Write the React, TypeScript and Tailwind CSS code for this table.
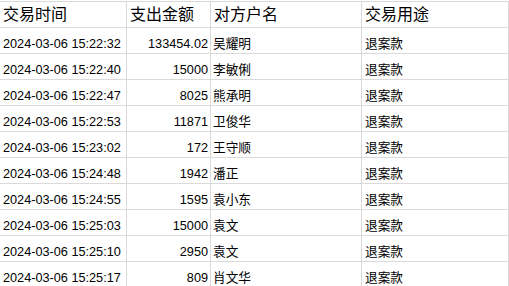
interface Txn {
    time: string;
    amount: string;
    name: string;
    purpose: string;
}

const rows: Txn[] = [
    { time: '2024-03-06 15:22:32', amount: '133454.02', name: '吴耀明', purpose: '退案款' },
    { time: '2024-03-06 15:22:40', amount: '15000', name: '李敏俐', purpose: '退案款' },
    { time: '2024-03-06 15:22:47', amount: '8025', name: '熊承明', purpose: '退案款' },
    { time: '2024-03-06 15:22:53', amount: '11871', name: '卫俊华', purpose: '退案款' },
    { time: '2024-03-06 15:23:02', amount: '172', name: '王守顺', purpose: '退案款' },
    { time: '2024-03-06 15:24:48', amount: '1942', name: '潘正', purpose: '退案款' },
    { time: '2024-03-06 15:24:55', amount: '1595', name: '袁小东', purpose: '退案款' },
    { time: '2024-03-06 15:25:03', amount: '15000', name: '袁文', purpose: '退案款' },
    { time: '2024-03-06 15:25:10', amount: '2950', name: '袁文', purpose: '退案款' },
    { time: '2024-03-06 15:25:17', amount: '809', name: '肖文华', purpose: '退案款' },
];

const font = {
    fontFamily: '"Liberation Sans", Arial, "Noto Sans CJK SC", sans-serif',
};

const cols = 'grid grid-cols-[127px_84px_151px_1fr]';
const cell = 'h-[26px] border-b border-r border-[#dadada] flex';

export default function App() {
    return (
        <div className="h-[286px] w-[509px] overflow-hidden bg-white text-black" style={font}>
            <div className={`mt-px border-t border-[#dadada] ${cols}`}>
                <HeadCell label="交易时间" />
                <HeadCell label="支出金额" />
                <HeadCell label="对方户名" />
                <HeadCell label="交易用途" className="pl-[3px]" />

                {rows.map((r, i) => (
                    <Row key={i} row={r} />
                ))}
            </div>
        </div>
    );
}

function HeadCell({ label, className = 'pl-[3px]' }: { label: string; className?: string }) {
    return (
        <div className={`${cell} items-center text-[16px] leading-[18px] ${className}`}>
            {label}
        </div>
    );
}

function Row({ row }: { row: Txn }) {
    const data = 'items-end pb-px text-[12.7px] leading-[15px]';
    return (
        <>
            <div className={`${cell} ${data} pl-[3px] whitespace-nowrap`}>{row.time}</div>
            <div className={`${cell} ${data} justify-end pr-[2px]`}>{row.amount}</div>
            <div className={`${cell} ${data} pl-[2px]`}>{row.name}</div>
            <div className={`${cell} ${data} pl-[3px]`}>{row.purpose}</div>
        </>
    );
}
